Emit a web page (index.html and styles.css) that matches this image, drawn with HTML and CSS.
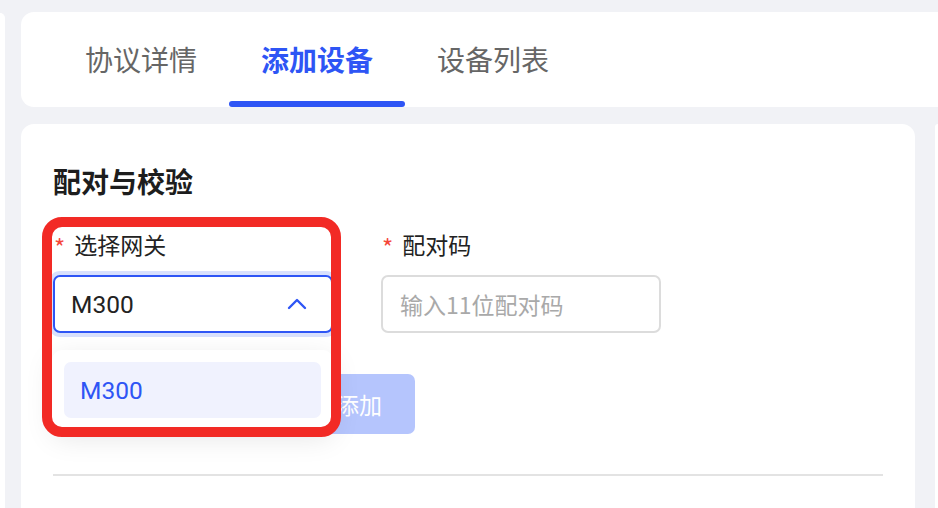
FILE: index.html
```html
<!DOCTYPE html>
<html lang="zh-CN">
<head>
<meta charset="utf-8">
<link rel="stylesheet" href="styles.css">
</head>
<body>
<div class="app">
  <div class="sidebar"></div>
  <div class="main">
    <div class="tabs-card">
      <div class="tab">协议详情</div>
      <div class="tab active">添加设备</div>
      <div class="tab">设备列表</div>
    </div>
    <div class="content-row">
      <div class="card">
        <div class="heading">配对与校验</div>
        <div class="form-row">
          <div class="field">
            <div class="label"><span class="req">*</span>选择网关</div>
            <div class="select-wrap">
              <div class="select">
                <span class="value">M300</span>
                <svg class="chev" width="20" height="12" viewBox="0 0 20 12"><path d="M2 10 L10 2 L18 10" fill="none" stroke="#2e55f5" stroke-width="2.4" stroke-linecap="round" stroke-linejoin="round"/></svg>
              </div>
              <div class="popup">
                <div class="option">M300</div>
              </div>
            </div>
          </div>
          <div class="field">
            <div class="label"><span class="req">*</span>配对码</div>
            <div class="input"><span class="placeholder">输入11位配对码</span></div>
          </div>
        </div>
        <div class="actions">
          <div class="btn">添加</div>
        </div>
        <div class="divider"></div>
        <div class="highlight"></div>
      </div>
      <div class="side-card"></div>
    </div>
  </div>
</div>
</body>
</html>
```

FILE: styles.css
```css
* { box-sizing: border-box; }
html, body {
  margin: 0;
  padding: 0;
}
body {
  width: 938px;
  height: 508px;
  overflow: hidden;
  background: #f1f2f6;
  font-family: "Roboto", "Noto Sans CJK SC", sans-serif;
  color: #222;
}
.app {
  width: 938px;
  height: 508px;
  overflow: hidden;
  display: flex;
  gap: 16px;
}
.sidebar {
  flex: none;
  width: 5px;
  height: 495px;
  margin-top: 13px;
  background: #fff;
  border-radius: 0 8px 0 0;
}
.main {
  flex: 1;
  min-width: 0;
  padding-top: 12px;
  display: flex;
  flex-direction: column;
  gap: 17px;
}
.tabs-card {
  height: 95px;
  background: #fff;
  border-radius: 13px 0 0 13px;
  padding-left: 32px;
  display: flex;
}
.tab {
  position: relative;
  padding: 0 32px 2px;
  display: flex;
  align-items: center;
  font-size: 28px;
  color: #666;
  font-family: "Noto Sans CJK SC", sans-serif;
}
.tab.active {
  color: #2e55f5;
  font-weight: 600;
}
.tab.active::after {
  content: "";
  position: absolute;
  left: 0;
  right: 0;
  bottom: 0;
  height: 6px;
  border-radius: 3px;
  background: #2e55f5;
}
.content-row {
  display: flex;
  gap: 20px;
}
.card {
  position: relative;
  flex: none;
  width: 894px;
  height: 384px;
  background: #fff;
  border-radius: 13px 13px 0 0;
  padding: 37px 32px 0;
}
.side-card {
  flex: 1;
  min-width: 0;
  height: 384px;
  background: #fff;
  border-radius: 10px 0 0 0;
}
.heading {
  font-family: "Noto Sans CJK SC", sans-serif;
  font-size: 28px;
  font-weight: 700;
  line-height: 40px;
  color: #1d1d1d;
}
.form-row {
  display: flex;
  gap: 48px;
  margin-top: 26px;
}
.field {
  width: 280px;
}
.label {
  font-family: "Noto Sans CJK SC", sans-serif;
  font-size: 23px;
  line-height: 34px;
  color: #222;
  display: flex;
  align-items: center;
}
.req {
  color: #f5473b;
  font-size: 24px;
  line-height: 1;
  margin-right: 9px;
  margin-left: 1px;
  position: relative;
  top: 3px;
}
.select-wrap {
  position: relative;
  margin-top: 14px;
}
.select {
  height: 58px;
  border: 2px solid #2e55f5;
  border-radius: 7px;
  box-shadow: 0 0 0 4px #d8e0fd;
  display: flex;
  align-items: center;
  justify-content: space-between;
  padding: 0 24px 0 16px;
  background: #fff;
}
.value {
  font-size: 24.5px;
  color: #222;
}
.chev {
  display: block;
}
.input {
  margin-top: 14px;
  height: 58px;
  border: 2px solid #dcdcdc;
  border-radius: 7px;
  display: flex;
  align-items: center;
  padding: 0 17px;
}
.placeholder {
  font-family: "Noto Sans CJK SC", sans-serif;
  font-size: 23px;
  color: #a9a9a9;
}
.popup {
  position: absolute;
  z-index: 2;
  left: -1px;
  top: calc(100% + 17px);
  width: 281px;
  padding: 12px;
  background: #fff;
  border-radius: 10px;
  box-shadow: 0 8px 28px rgba(0, 0, 0, 0.10);
}
.option {
  height: 56px;
  border-radius: 7px;
  background: #f0f2fe;
  color: #2e55f5;
  font-size: 24.5px;
  display: flex;
  align-items: center;
  padding-left: 16px;
}
.actions {
  display: flex;
  margin-top: 41px;
}
.btn {
  margin-left: 250px;
  width: 112px;
  height: 60px;
  border-radius: 7px;
  background: #b5c5fd;
  color: #fff;
  font-family: "Noto Sans CJK SC", sans-serif;
  font-size: 23px;
  display: flex;
  align-items: center;
  justify-content: center;
}
.divider {
  margin-top: 40px;
  height: 2px;
  background: #e3e3e3;
}
.highlight {
  position: absolute;
  z-index: 3;
  left: 21px;
  top: 93px;
  width: 299px;
  height: 220px;
  border: 10px solid #f22a25;
  border-radius: 20px;
  pointer-events: none;
}
```
